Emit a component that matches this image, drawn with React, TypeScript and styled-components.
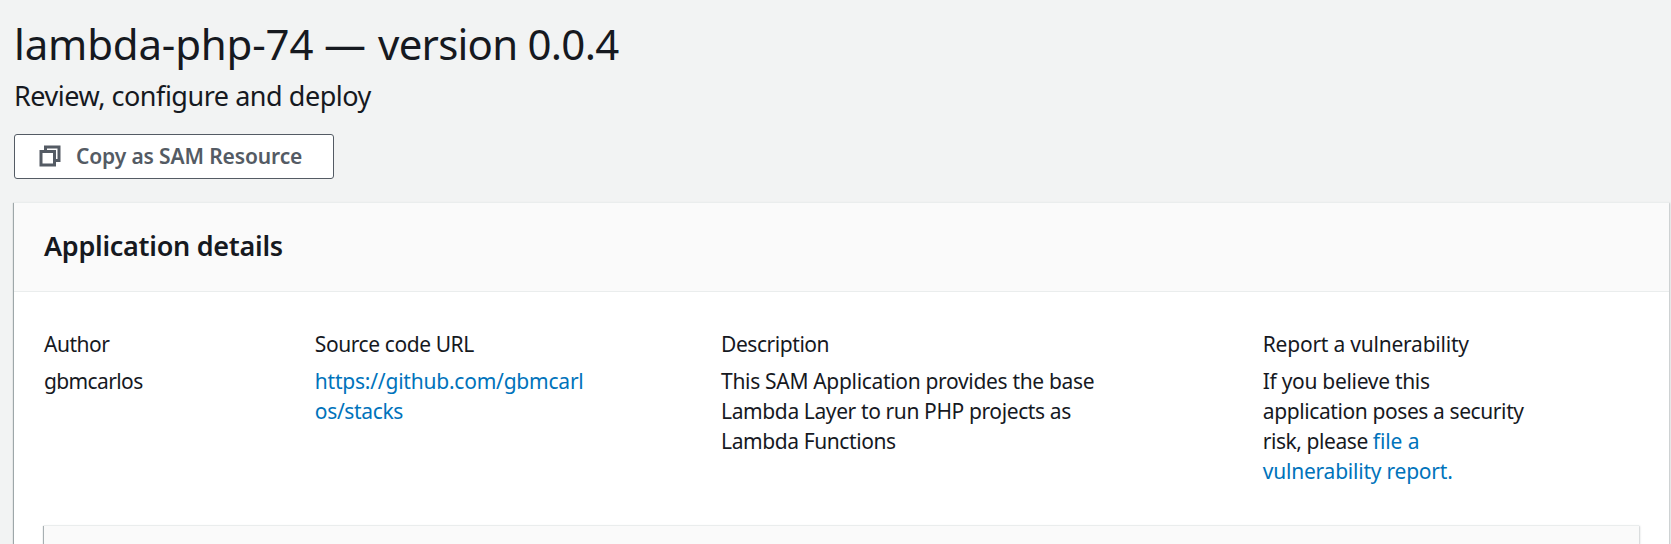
import React from 'react';
import styled, { createGlobalStyle } from 'styled-components';

const GlobalStyle = createGlobalStyle`
  * { box-sizing: border-box; }
  body {
    margin: 0;
    background: #f2f3f3;
    color: #16191f;
    font-family: "Noto Sans", "Open Sans", sans-serif;
    font-size: 21px;
    line-height: 30px;
  }
`;

const Page = styled.main`
  display: flex;
  flex-direction: column;
  height: 100vh;
  overflow: hidden;
  padding: 14px 2px 0 14px;
`;

const Title = styled.h1`
  margin: 0;
  font-size: 42px;
  font-weight: 400;
  line-height: 60px;
  letter-spacing: -0.18px;
  white-space: nowrap;
`;

const Version = styled.span`
  margin-left: 1.5px;
  letter-spacing: -0.76px;
`;

const Subtitle = styled.p`
  margin: 4px 0 0;
  font-size: 27px;
  line-height: 36px;
  letter-spacing: -0.47px;
`;

const CopyButton = styled.button`
  display: flex;
  flex: none;
  align-items: center;
  width: 320px;
  height: 45px;
  margin: 20px 0 23px;
  padding: 0 0 1px 23px;
  border: 1px solid #545b64;
  border-radius: 3px;
  background: #fff;
  color: #545b64;
  font: 600 21px/30px "Noto Sans", "Open Sans", sans-serif;
  letter-spacing: -0.13px;
  white-space: nowrap;
`;

const CopyIcon = styled.svg`
  flex: none;
  width: 24px;
  height: 24px;
  margin-right: 14px;
  fill: none;
  stroke: currentColor;
  stroke-width: 2;
`;

const Card = styled.section`
  display: flex;
  flex: 1;
  flex-direction: column;
  min-height: 0;
  background: #fff;
  border-top: 1px solid #eaeded;
  box-shadow: 0 1px 1px rgba(0, 28, 36, 0.3), 1px 1px 2px rgba(0, 28, 36, 0.15),
    -1px 1px 1px rgba(0, 28, 36, 0.3);
`;

const CardHeader = styled.header`
  flex: none;
  height: 89px;
  padding: 25px 30px 0;
  background: #fafafa;
  border-bottom: 1px solid #eaeded;
`;

const CardTitle = styled.h2`
  margin: 0;
  font-size: 27px;
  font-weight: 600;
  line-height: 36px;
  letter-spacing: -0.28px;
`;

const Details = styled.dl`
  display: grid;
  flex: none;
  grid-template-columns: 2fr 3fr 4fr 3fr;
  height: 233px;
  margin: 0;
  padding: 37px 0 0 30px;
`;

const Label = styled.dt<{ $spacing: number }>`
  letter-spacing: ${(p) => p.$spacing}px;
`;

const Value = styled.dd`
  margin: 7px 0 0;
`;

const Line = styled.span<{ $spacing: number }>`
  display: block;
  white-space: nowrap;
  letter-spacing: ${(p) => p.$spacing}px;
`;

const Link = styled.a<{ $spacing?: number }>`
  color: #0073bb;
  text-decoration: none;
  letter-spacing: ${(p) => (p.$spacing === undefined ? 'inherit' : `${p.$spacing}px`)};
`;

const NestedPanel = styled.div`
  flex: 1;
  margin: 0 30px;
  background: #fafafa;
  border-top: 1px solid #eaeded;
  box-shadow: 0 1px 1px rgba(0, 28, 36, 0.3), 1px 1px 2px rgba(0, 28, 36, 0.15),
    -1px 1px 1px rgba(0, 28, 36, 0.3);
`;

export default function App() {
  return (
    <>
      <GlobalStyle />
      <Page>
        <Title>
          lambda-php-74 — <Version>version 0.0.4</Version>
        </Title>
        <Subtitle>Review, configure and deploy</Subtitle>
        <CopyButton type="button">
          <CopyIcon viewBox="0 0 16 16" aria-hidden="true">
            <path d="M2 5h9v9H2z" />
            <path d="M5 5V2h9v9h-3" />
          </CopyIcon>
          Copy as SAM Resource
        </CopyButton>
        <Card>
          <CardHeader>
            <CardTitle>Application details</CardTitle>
          </CardHeader>
          <Details>
            <div>
              <Label $spacing={-0.5}>Author</Label>
              <Value>
                <Line $spacing={-0.62}>gbmcarlos</Line>
              </Value>
            </div>
            <div>
              <Label $spacing={-0.42}>Source code URL</Label>
              <Value>
                <Link href="#">
                  <Line $spacing={-0.22}>https://github.com/gbmcarl</Line>
                  <Line $spacing={-0.35}>os/stacks</Line>
                </Link>
              </Value>
            </div>
            <div>
              <Label $spacing={-0.45}>Description</Label>
              <Value>
                <Line $spacing={-0.32}>This SAM Application provides the base</Line>
                <Line $spacing={-0.39}>Lambda Layer to run PHP projects as</Line>
                <Line $spacing={-0.41}>Lambda Functions</Line>
              </Value>
            </div>
            <div>
              <Label $spacing={-0.22}>Report a vulnerability</Label>
              <Value>
                <Line $spacing={-0.3}>If you believe this</Line>
                <Line $spacing={-0.4}>application poses a security</Line>
                <Line $spacing={-0.44}>
                  risk, please <Link href="#" $spacing={-0.1}>file a</Link>
                </Line>
                <Line $spacing={-0.22}>
                  <Link href="#">vulnerability report.</Link>
                </Line>
              </Value>
            </div>
          </Details>
          <NestedPanel />
        </Card>
      </Page>
    </>
  );
}
